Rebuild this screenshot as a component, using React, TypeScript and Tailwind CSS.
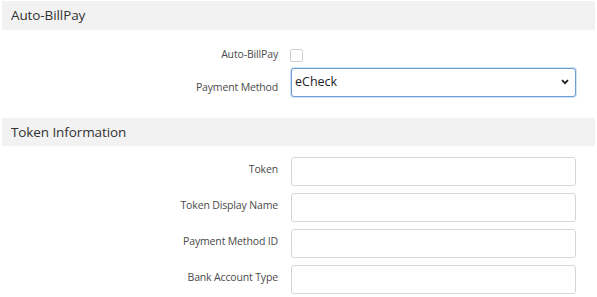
import React from "react";

const labelCls =
  "w-[278px] shrink-0 text-right text-[10.5px] leading-4 tracking-[-0.15px] text-[#4a4a4a]";

function InputRow({ label, first }: { label: string; first?: boolean }) {
  return (
    <div className={`flex items-start ${first ? "" : "mt-[7px]"}`}>
      <div className={`${labelCls} pt-[4px]`}>{label}</div>
      <div className="ml-[13px] h-[29px] w-[285px] rounded-[3px] border border-[#d6d6d6] bg-white" />
    </div>
  );
}

export default function App() {
  return (
    <div className="h-[297px] w-[597px] overflow-hidden bg-white font-['Open_Sans',sans-serif] text-[#333]">
      <div className="mx-[2px] mt-px flex h-[29px] items-center bg-[#f2f2f2] pl-[9px] text-[13.5px] tracking-[-0.1px] text-[#333]">
        Auto-BillPay
      </div>

      <div className="mt-[16px] flex items-start">
        <div className={labelCls}>Auto-BillPay</div>
        <div className="ml-[12px] mt-[3px] h-[13px] w-[13px] rounded-[2px] border border-[#cfcfcf] bg-white" />
      </div>

      <div className="mt-[6px] flex items-start">
        <div className={`${labelCls} pt-[11px]`}>Payment Method</div>
        <div className="relative ml-[13px] flex h-[29px] w-[285px] items-center rounded-[3px] border border-[#6d9fd6] bg-white pl-[3px] text-[12.5px] text-[#222] shadow-[0_0_0_1px_rgba(150,190,235,0.45)]">
          eCheck
          <svg
            className="absolute right-[6px] top-[10px]"
            width="8"
            height="6"
            viewBox="0 0 8 6"
          >
            <path
              d="M1 1.2 L4 4.2 L7 1.2"
              fill="none"
              stroke="#222"
              strokeWidth="1.8"
            />
          </svg>
        </div>
      </div>

      <div className="mx-[2px] mt-[21px] flex h-[28px] items-center bg-[#f2f2f2] pl-[9px] text-[13.5px] tracking-[-0.1px] text-[#333]">
        Token Information
      </div>

      <div className="mt-[11px]">
        <InputRow label="Token" first />
        <InputRow label="Token Display Name" />
        <InputRow label="Payment Method ID" />
        <InputRow label="Bank Account Type" />
      </div>
    </div>
  );
}
